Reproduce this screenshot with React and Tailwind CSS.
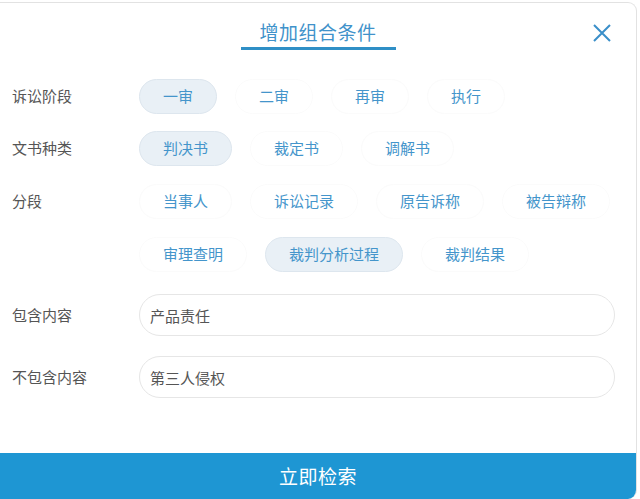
import { useState } from "react";

const FONT = {
  fontFamily: '"Noto Sans CJK SC", "Noto Sans", sans-serif',
};

const STAGES = ["一审", "二审", "再审", "执行"];
const DOC_TYPES = ["判决书", "裁定书", "调解书"];
const SECTIONS = [
  "当事人",
  "诉讼记录",
  "原告诉称",
  "被告辩称",
  "审理查明",
  "裁判分析过程",
  "裁判结果",
];

function Pill({ label, active, onClick }) {
  return (
    <button
      type="button"
      onClick={onClick}
      className={
        active
          ? "h-[35px] px-[23px] rounded-full text-[15px] text-[#4495cb] bg-[#e9f0f6] border border-[#dde6ee]"
          : "h-[35px] px-[23px] rounded-full text-[15px] text-[#4495cb] bg-white border border-[#fbfbfb]"
      }
    >
      {label}
    </button>
  );
}

function Row({ label, children, className = "" }) {
  return (
    <div className={`flex items-start ${className}`}>
      <div className="w-[127px] shrink-0 h-[35px] flex items-center text-[15px] text-[#555]">
        {label}
      </div>
      {children}
    </div>
  );
}

export default function App() {
  const [stage, setStage] = useState("一审");
  const [docType, setDocType] = useState("判决书");
  const [section, setSection] = useState("裁判分析过程");
  const [include, setInclude] = useState("产品责任");
  const [exclude, setExclude] = useState("第三人侵权");

  return (
    <div className="w-[640px] h-[499px] bg-white pt-[2px] overflow-hidden" style={FONT}>
      <div className="w-[637px] h-[497px] flex flex-col bg-white border-t border-r border-[#e2e2e2] rounded-tr-[9px] rounded-br-[9px] overflow-hidden">
        {/* header */}
        <div className="relative h-[74px] flex justify-center pt-[16px]">
          <div className="flex flex-col items-center">
            <h1 className="text-[19px] leading-[26px] text-[#4092ca] tracking-[0.5px]">
              增加组合条件
            </h1>
            <div className="mt-[2px] w-[155px] h-[3px] bg-[#2f8fc6]" />
          </div>
          <button
            type="button"
            className="absolute right-[24px] top-[20px] text-[#3a8fc9]"
            aria-label="关闭"
          >
            <svg width="20" height="20" viewBox="0 0 20 20" fill="none">
              <path d="M2 2L18 18M18 2L2 18" stroke="currentColor" strokeWidth="2" />
            </svg>
          </button>
        </div>

        {/* filters */}
        <div className="pl-[12px] pr-[12px] flex flex-col">
          <Row label="诉讼阶段" className="mt-[2px]">
            <div className="flex flex-wrap gap-x-[18px] gap-y-[18px]">
              {STAGES.map((s) => (
                <Pill key={s} label={s} active={stage === s} onClick={() => setStage(s)} />
              ))}
            </div>
          </Row>

          <Row label="文书种类" className="mt-[17px]">
            <div className="flex flex-wrap gap-x-[18px] gap-y-[18px]">
              {DOC_TYPES.map((s) => (
                <Pill key={s} label={s} active={docType === s} onClick={() => setDocType(s)} />
              ))}
            </div>
          </Row>

          <Row label="分段" className="mt-[18px]">
            <div className="flex flex-wrap gap-x-[18px] gap-y-[18px] w-[490px]">
              {SECTIONS.map((s) => (
                <Pill key={s} label={s} active={section === s} onClick={() => setSection(s)} />
              ))}
            </div>
          </Row>

          <div className="mt-[22px] flex items-center pr-[9px]">
            <div className="w-[127px] shrink-0 text-[15px] text-[#555]">包含内容</div>
            <input
              value={include}
              onChange={(e) => setInclude(e.target.value)}
              className="flex-1 h-[42px] rounded-[21px] border border-[#e6e6e6] px-[10px] text-[15px] text-[#555] outline-none"
            />
          </div>

          <div className="mt-[20px] flex items-center pr-[9px]">
            <div className="w-[127px] shrink-0 text-[15px] text-[#555]">不包含内容</div>
            <input
              value={exclude}
              onChange={(e) => setExclude(e.target.value)}
              className="flex-1 h-[42px] rounded-[21px] border border-[#e6e6e6] px-[10px] text-[15px] text-[#555] outline-none"
            />
          </div>
        </div>

        {/* submit */}
        <button
          type="button"
          className="mt-auto h-[46px] w-full bg-[#1e96d3] text-white text-[19px] tracking-[0.5px]"
        >
          立即检索
        </button>
      </div>
    </div>
  );
}
